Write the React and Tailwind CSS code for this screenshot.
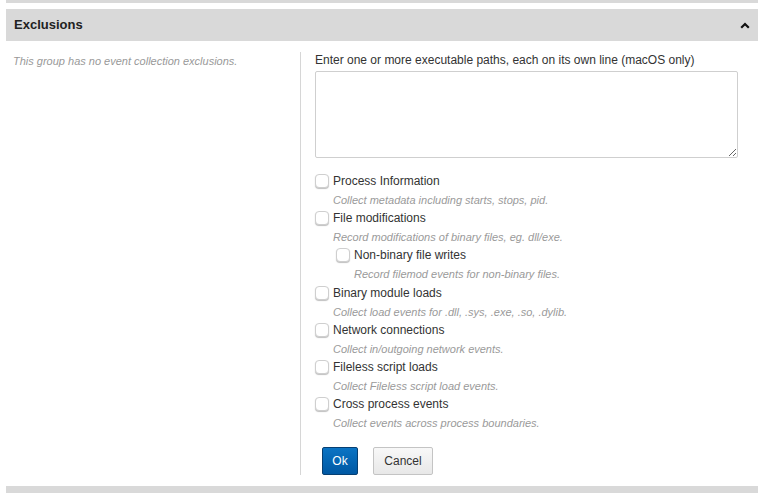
const options = [
	{ label: 'Process Information', desc: 'Collect metadata including starts, stops, pid.' },
	{ label: 'File modifications', desc: 'Record modifications of binary files, eg. dll/exe.' },
	{ label: 'Non-binary file writes', desc: 'Record filemod events for non-binary files.', nested: true },
	{ label: 'Binary module loads', desc: 'Collect load events for .dll, .sys, .exe, .so, .dylib.' },
	{ label: 'Network connections', desc: 'Collect in/outgoing network events.' },
	{ label: 'Fileless script loads', desc: 'Collect Fileless script load events.' },
	{ label: 'Cross process events', desc: 'Collect events across process boundaries.' }
];

function CheckOption({ label, desc, nested }) {
	return (
		<div className={nested ? 'pl-[21px]' : ''}>
			<label className="flex items-center h-[18px] text-[12px] text-[#333]">
				<span className="w-[14px] h-[14px] mr-[4px] rounded-[4px] border border-[#cfcfcf] bg-white shadow-[0_1px_1px_rgba(0,0,0,0.25)] shrink-0" />
				{label}
			</label>
			<p className="pl-[18px] h-[19.2px] leading-[21px] text-[11px] italic text-[#9a9a9a]">{desc}</p>
		</div>
	);
}

export default function App() {
	return (
		<div className="w-[760px] h-[493px] bg-white pl-[6px] pr-[2px] overflow-hidden" style={{ fontFamily: '"Liberation Sans", Arial, sans-serif' }}>
			<div className="h-[3px] bg-[#d9d9d9]" />
			<div className="mt-[6px] h-[32px] bg-[#d9d9d9] flex items-center justify-between pl-[8px] pr-[8px]">
				<span className="text-[13px] font-bold text-[#222]">Exclusions</span>
				<svg width="10" height="7" viewBox="0 0 10 7">
					<polyline points="1.2,5.8 5,2 8.8,5.8" fill="none" stroke="#111" strokeWidth="2.2" />
				</svg>
			</div>

			<div className="flex mt-[11px]">
				<div className="w-[294px] pl-[7px] pt-[3px]">
					<p className="text-[11px] italic text-[#999] leading-[13px]">This group has no event collection exclusions.</p>
				</div>
				<div className="flex-1 border-l border-[#d6d6d6] pl-[14px] pr-[20px]">
					<p className="text-[12px] text-[#333] leading-[14px] pt-[1px]">Enter one or more executable paths, each on its own line (macOS only)</p>
					<textarea className="block mt-[4px] w-full h-[87px] border border-[#cfcfcf] rounded-[2px] bg-white resize-y" />
					<div className="mt-[14px] flex flex-col">
						{options.map(o => (
							<CheckOption key={o.label} {...o} />
						))}
					</div>
					<div className="flex gap-[15px] pl-[7px] mt-[14.6px]">
						<button className="w-[36px] h-[28px] rounded-[2px] border border-[#063f72] bg-gradient-to-b from-[#0b74c4] to-[#0058a3] text-white text-[12px]">Ok</button>
						<button className="w-[60px] h-[28px] rounded-[2px] border border-[#c4c4c4] bg-gradient-to-b from-[#f8f8f8] to-[#e8e8e8] text-[#333] text-[12px]">Cancel</button>
					</div>
				</div>
			</div>

			<div className="mt-[11px] h-[8px] bg-[#d9d9d9]" />
		</div>
	);
}
